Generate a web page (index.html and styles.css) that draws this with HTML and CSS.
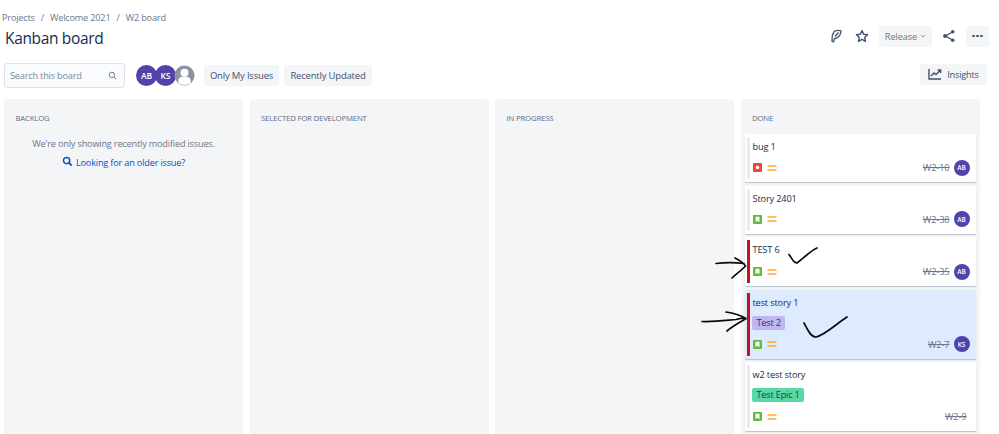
FILE: index.html
```html
<!DOCTYPE html>
<html lang="en">
<head>
<meta charset="utf-8">
<title>Kanban board</title>
<link rel="stylesheet" href="styles.css">
</head>
<body>
<svg width="0" height="0" class="defs">
  <symbol id="story" viewBox="0 0 10 10"><rect width="10" height="10" rx="1" fill="#63ba3c"/><path d="M2.800 2h4.400v6L5 6.500 2.800 8z" fill="#fff"/></symbol>
  <symbol id="bug" viewBox="0 0 10 10"><rect width="10" height="10" rx="1" fill="#e5493a"/><circle cx="5" cy="5" r="2" fill="#fff"/></symbol>
  <symbol id="prio" viewBox="0 0 10 6"><path d="M1 1h8M1 5h8" stroke="#ffab2d" stroke-width="1.400" stroke-linecap="round"/></symbol>
</svg>
<header class="top">
  <div class="top-left">
    <nav class="crumbs"><span>Projects</span><i>/</i><span>Welcome 2021</span><i>/</i><span>W2 board</span></nav>
    <h1>Kanban board</h1>
  </div>
  <div class="top-right">
    <svg class="ico bolt" viewBox="0 0 14 14"><path d="M5 2.500 C7 1.500 10 1.200 12 1.800 C12 5 10 8 7 9.300 L5.600 9.300 L4.600 12.800 L3 12.200 L3.200 7 Z M6 7.500 L9.500 3.500" fill="none" stroke="#42526e" stroke-width="1.300" stroke-linejoin="round"/></svg>
    <svg class="ico star" viewBox="0 0 14 14"><path d="M7 1.600l1.700 3.600 3.900.5-2.900 2.700.8 3.900L7 10.400l-3.500 1.900.8-3.900-2.900-2.700 3.900-.5z" fill="none" stroke="#42526e" stroke-width="1.400" stroke-linejoin="round"/></svg>
    <div class="btn release">Release <svg viewBox="0 0 8 5" class="chev"><path d="M1 1l3 3 3-3" fill="none" stroke="#6b778c" stroke-width="1"/></svg></div>
    <svg class="ico share" viewBox="0 0 14 14"><path d="M10.500 3 L3.500 7 L10.500 11" fill="none" stroke="#42526e" stroke-width="1.300"/><circle cx="10.700" cy="2.800" r="1.800" fill="#42526e"/><circle cx="3" cy="7" r="1.900" fill="#42526e"/><circle cx="10.700" cy="11.200" r="1.800" fill="#42526e"/></svg>
    <div class="btn more"><b></b><b></b><b></b></div>
  </div>
</header>
<section class="tools">
  <div class="search"><span>Search this board</span><svg viewBox="0 0 10 10"><circle cx="4.300" cy="4.300" r="3" fill="none" stroke="#5e6c84" stroke-width="1"/><path d="M6.600 6.600l2.400 2.400" stroke="#5e6c84" stroke-width="1"/></svg></div>
  <div class="people">
    <span class="avatar">AB</span><span class="avatar">KS</span>
    <svg class="anon" viewBox="0 0 22 22"><circle cx="11" cy="11" r="10.500" fill="#8993a4"/><circle cx="11" cy="8" r="4.200" fill="#fff"/><path d="M4.500 18.500v-2c0-2.600 2.400-4.200 4-4.200h5c1.600 0 4 1.600 4 4.200v2a10 10 0 0 1-13 0z" fill="#fff"/></svg>
  </div>
  <div class="btn filter">Only My Issues</div>
  <div class="btn filter">Recently Updated</div>
  <div class="btn insights"><svg viewBox="0 0 14 12"><path d="M1 1v10h12" fill="none" stroke="#42526e" stroke-width="1.400"/><path d="M3 8l3-3 2 1.600 4-3.800M9.600 2H12.600V5" fill="none" stroke="#42526e" stroke-width="1.400"/></svg>Insights</div>
</section>
<main class="board">
  <div class="col">
    <h2>BACKLOG</h2>
    <p class="note">We're only showing recently modified issues.</p>
    <p class="older"><svg viewBox="0 0 12 12"><circle cx="5" cy="5" r="3.400" fill="none" stroke="#0052cc" stroke-width="1.600"/><path d="M7.600 7.600l3 3" stroke="#0052cc" stroke-width="2"/></svg>Looking for an older issue?</p>
  </div>
  <div class="col"><h2>SELECTED FOR DEVELOPMENT</h2></div>
  <div class="col"><h2>IN PROGRESS</h2></div>
  <div class="col done">
    <h2>DONE</h2>
    <article class="card">
      <div class="title">bug 1</div>
      <div class="foot"><svg class="type"><use href="#bug"/></svg><svg class="prio"><use href="#prio"/></svg><s>W2-10</s><span class="avatar sm">AB</span></div>
    </article>
    <article class="card">
      <div class="title">Story 2401</div>
      <div class="foot"><svg class="type"><use href="#story"/></svg><svg class="prio"><use href="#prio"/></svg><s>W2-38</s><span class="avatar sm">AB</span></div>
    </article>
    <article class="card flagged">
      <div class="title">TEST 6</div>
      <div class="foot"><svg class="type"><use href="#story"/></svg><svg class="prio"><use href="#prio"/></svg><s>W2-35</s><span class="avatar sm">AB</span></div>
    </article>
    <article class="card flagged selected tall">
      <div class="title">test story 1</div>
      <div class="tag purple">Test 2</div>
      <div class="foot"><svg class="type"><use href="#story"/></svg><svg class="prio"><use href="#prio"/></svg><s>W2-7</s><span class="avatar sm">KS</span></div>
    </article>
    <article class="card tall">
      <div class="title">w2 test story</div>
      <div class="tag green">Test Epic 1</div>
      <div class="foot plain"><svg class="type"><use href="#story"/></svg><svg class="prio"><use href="#prio"/></svg><s>W2-9</s></div>
    </article>
  </div>
</main>
<svg class="ink" viewBox="0 0 999 434">
  <path d="M716 263.500C725 262.500 735 262.500 744 263.500M735 258C739 260 743 262 745.500 266C742 270 736 274 732 278" />
  <path d="M702 321.500C715 322 725 320.500 736 319.500C740 318.500 745 318 746 318.500M726 312C733 313 740 315 746 318.500C739 323 733 326 727 331" />
  <path d="M789 254.500C792 258 793 263 797 263C804 258 810 251 817 248" />
  <path d="M804 323C807 328 810 337 816 337C825 335 836 324 847 317" />
</svg>
</body>
</html>
```
FILE: styles.css
```css
* { box-sizing: border-box; }
html, body { margin: 0; height: 434px; overflow: hidden; background: #fff; }
body { font-family: "Open Sans", "Liberation Sans", sans-serif; color: #172b4d; position: relative; width: 999px; }
.defs { position: absolute; }
.top { display: flex; justify-content: space-between; height: 50px; padding-top: 11px; }
.crumbs { display: flex; gap: 6px; padding-left: 2px; font-size: 9.200px; line-height: 13px; color: #6b778c; letter-spacing: -.2px; }
.crumbs i { font-style: normal; }
h1 { margin: 3px 0 0 5px; font-size: 15.500px; line-height: 22px; font-weight: 500; color: #172b4d; letter-spacing: -.35px; }
.top-right { display: flex; align-items: center; height: 26px; margin-top: 12px; padding-right: 10px; }
.ico { width: 14px; height: 14px; display: block; }
.bolt { margin-right: 12px; }
.star { margin-right: 10px; }
.btn { background: #f4f5f7; border-radius: 3px; color: #42526e; display: flex; align-items: center; justify-content: center; }
.release { width: 53px; height: 21px; font-size: 9.200px; color: #6b778c; gap: 3px; margin-right: 10px; letter-spacing: -.1px; }
.chev { width: 6px; height: 4px; }
.share { margin-right: 10px; }
.more { width: 23px; height: 21px; gap: 1.500px; }
.more b { width: 2.500px; height: 2.500px; border-radius: 50%; background: #42526e; }
.tools { display: flex; align-items: center; height: 26px; margin-top: 12px; padding-left: 4px; padding-right: 12px; }
.search { width: 121px; height: 25px; border: 1px solid #dfe1e6; border-radius: 3px; background: #fafbfc; display: flex; align-items: center; justify-content: space-between; padding: 0 7px 0 5px; font-size: 9.200px; color: #7a869a; letter-spacing: -.2px; }
.search svg { width: 9px; height: 9px; }
.people { display: flex; margin-left: 11px; align-items: center; }
.avatar { width: 21px; height: 21px; border-radius: 50%; background: #5243aa; color: #fff; font-size: 8.500px; font-weight: 600; display: flex; align-items: center; justify-content: center; }
.people .avatar + .avatar { margin-left: -2px; }
.anon { width: 21px; height: 21px; margin-left: -2px; }
.filter { height: 21px; width: 88px; font-size: 9.500px; margin-left: 5px; letter-spacing: -.2px; font-weight: 500; }
.people + .filter { margin-left: 9px; width: 75px; }
.insights { margin-left: auto; width: 67px; height: 21px; font-size: 9.200px; gap: 5px; position: relative; top: -1px; letter-spacing: -.2px; }
.insights svg { width: 14px; height: 12px; }
.board { display: grid; grid-template-columns: repeat(4, 239px); column-gap: 6.500px; padding-left: 4px; margin-top: 11px; }
.col { background: #f4f5f7; border-radius: 3px 3px 0 0; height: 336px; padding: 13px 0 0; }
.col h2 { margin: 0 0 0 11.500px; font-size: 7.800px; line-height: 12px; font-weight: 400; color: #5e6c84; letter-spacing: -.2px; }
.note { margin: 13px 0 0; font-size: 9.200px; line-height: 13px; text-align: center; color: #6b778c; letter-spacing: -.2px; }
.older { margin: 6px 0 0; font-size: 9.200px; line-height: 13px; text-align: center; color: #0052cc; display: flex; justify-content: center; align-items: center; gap: 3px; letter-spacing: -.2px; }
.older svg { width: 11px; height: 11px; position: relative; top: -1px; }
.done { padding-top: 13px; }
.done h2 { margin-bottom: 10px; }
.card { margin: 0 4px 3.500px; background: #fff; border-radius: 1px; box-shadow: 0 1px 1px rgba(9,30,66,.25); padding: 6px 9px 0 8px; height: 48px; position: relative; }
.card::before { content: ""; position: absolute; left: 2.500px; top: 3px; bottom: 3px; width: 2.500px; background: #ebecf0; }
.flagged { height: 49px; }
.flagged::before { background: #c8101e; width: 3px; }
.selected { background: #deebff; }
.tall { height: 69px; }
.title { font-size: 9.200px; line-height: 14px; color: #172b4d; letter-spacing: -.15px; }
.foot { position: absolute; left: 8px; right: 6px; bottom: 4px; height: 21px; display: flex; align-items: center; }
.foot.plain { right: 9px; }
.type { width: 9px; height: 9px; margin-right: 5px; }
.prio { width: 10px; height: 6px; }
.foot s { margin-left: auto; font-size: 9.200px; color: #6b778c; letter-spacing: -.1px; }
.avatar.sm { width: 16px; height: 16px; font-size: 6.500px; margin-left: 4px; }
.tag { position: absolute; left: 7px; height: 14px; border-radius: 2px; font-size: 9.200px; line-height: 14px; padding: 0 4px 0 5px; color: #253858; letter-spacing: -.2px; }
.purple { background: #c0b6f2; top: 26px; }
.green { background: #57d9a3; top: 26px; }
.ink { position: absolute; left: 0; top: 0; width: 999px; height: 434px; pointer-events: none; }
.ink path { fill: none; stroke: #0a0a0a; stroke-width: 1.700px; stroke-linecap: round; stroke-linejoin: round; }
```
